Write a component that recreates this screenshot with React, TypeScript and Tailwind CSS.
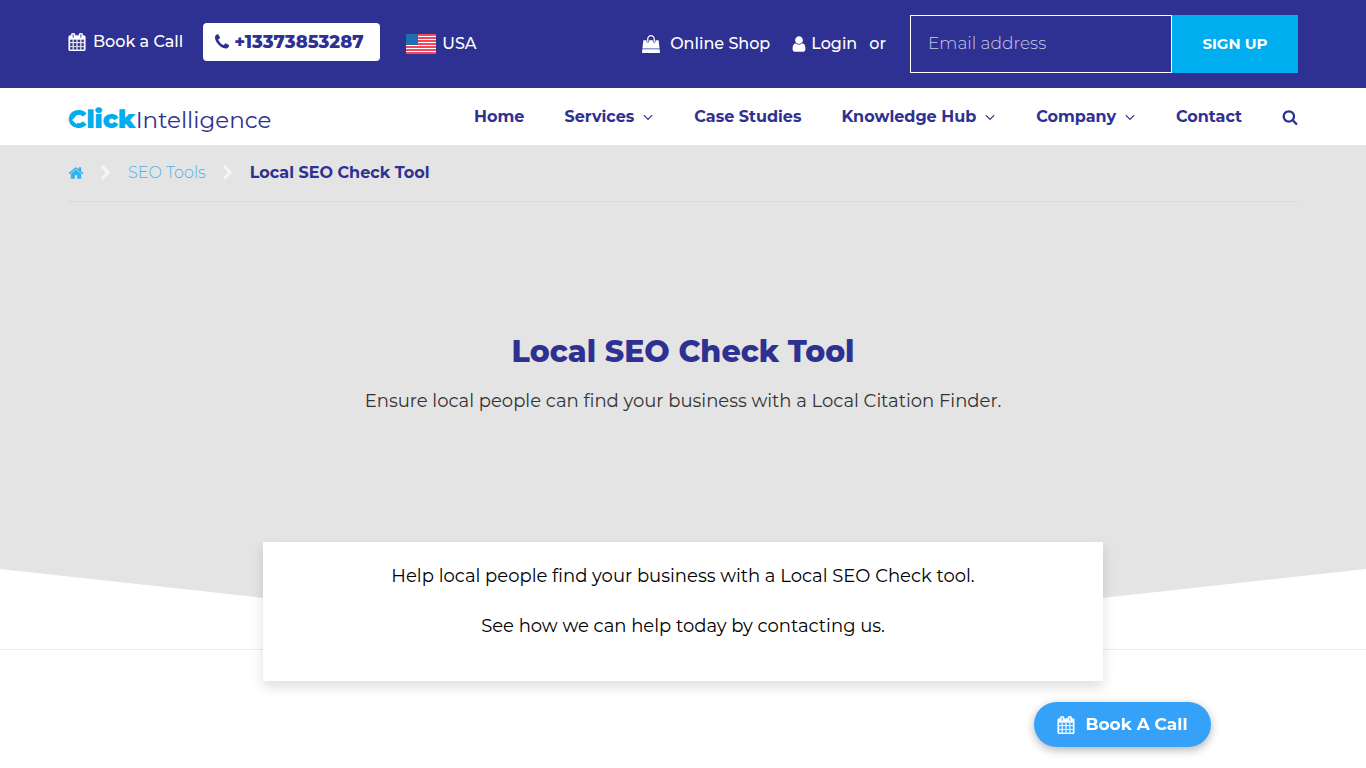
import type { ReactNode } from 'react';

const icons = {
  home: 'M1472 992v480q0 26-19 45t-45 19h-384v-384h-256v384h-384q-26 0-45-19t-19-45v-480q0-1 .5-3t.5-3l575-474 575 474q1 2 1 6zm223-69l-62 74q-8 9-21 11h-3q-13 0-21-7l-692-577-692 577q-12 8-24 7-13-2-21-11l-62-74q-8-10-7-23.5t11-21.5l719-599q32-26 76-26t76 26l244 204v-195q0-14 9-23t23-9h192q14 0 23 9t9 23v408l219 182q10 8 11 21.5t-7 23.5z',
  calendar:
    'M192 1664h288v-288h-288v288zm352 0h320v-288h-320v288zm-352-352h288v-320h-288v320zm352 0h320v-320h-320v320zm-352-384h288v-288h-288v288zm736 736h320v-288h-320v288zm-384-736h320v-288h-320v288zm768 736h288v-288h-288v288zm-384-352h320v-320h-320v320zm-352-864v-288q0-13-9.5-22.5t-22.5-9.5h-64q-13 0-22.5 9.5t-9.5 22.5v288q0 13 9.5 22.5t22.5 9.5h64q13 0 22.5-9.5t9.5-22.5zm736 864h288v-320h-288v320zm-384-384h320v-288h-320v288zm384 0h288v-288h-288v288zm32-480v-288q0-13-9.5-22.5t-22.5-9.5h-64q-13 0-22.5 9.5t-9.5 22.5v288q0 13 9.5 22.5t22.5 9.5h64q13 0 22.5-9.5t9.5-22.5zm384-64v1280q0 52-38 90t-90 38h-1408q-52 0-90-38t-38-90v-1280q0-52 38-90t90-38h128v-96q0-66 47-113t113-47h64q66 0 113 47t47 113v96h384v-96q0-66 47-113t113-47h64q66 0 113 47t47 113v96h128q52 0 90 38t38 90z',
  phone:
    'M1600 1240q0 27-10 70.5t-21 68.5q-21 50-122 106-94 51-186 51-27 0-52.5-3.5t-57.5-12.5-47.5-14.5-55.5-20.5-49-18q-98-35-175-83-128-79-264.5-215.5t-215.5-264.5q-48-77-83-175-3-9-18-49t-20.5-55.5-14.5-47.5-12.5-57.5-3.5-52.5q0-92 51-186 56-101 106-122 25-11 68.5-21t70.5-10q14 0 21 3 18 6 53 76 11 19 30 54t35 63.5 31 53.5q3 4 17.5 25t21.5 35.5 7 28.5q0 20-28.5 50t-62 55-62 53-28.5 46q0 9 5 22.5t8.5 20.5 14 24 11.5 19q76 137 174 235t235 174q2 1 19 11.5t24 14 20.5 8.5 22.5 5q18 0 46-28.5t53-62 55-62 50-28.5q14 0 28.5 7t35.5 21.5 25 17.5q25 15 53.5 31t63.5 35 54 30q70 35 76 53 3 7 3 21z',
  search:
    'M1216 832q0-185-131.5-316.5t-316.5-131.5-316.5 131.5-131.5 316.5 131.5 316.5 316.5 131.5 316.5-131.5 131.5-316.5zm512 832q0 52-38 90t-90 38q-54 0-90-38l-343-342q-179 124-399 124-143 0-273.5-55.5t-225-150-150-225-55.5-273.5 55.5-273.5 150-225 225-150 273.5-55.5 273.5 55.5 225 150 150 225 55.5 273.5q0 220-124 399l343 343q37 37 37 90z',
  user: 'M1536 1399q0 109-62.5 187t-150.5 78h-854q-88 0-150.5-78t-62.5-187q0-85 8.5-160.5t31.5-152 58.5-131 94-89 134.5-34.5q131 128 313 128t313-128q76 0 134.5 34.5t94 89 58.5 131 31.5 152 8.5 160.5zm-256-887q0 159-112.5 271.5t-271.5 112.5-271.5-112.5-112.5-271.5 112.5-271.5 271.5-112.5 271.5 112.5 112.5 271.5z',
  bag: 'M1757 1408l35 313q3 28-16 50-19 21-48 21h-1664q-29 0-48-21-19-22-16-50l35-313h1722zm-93-839l86 775h-1708l86-775q3-24 21-40.5t43-16.5h256v128q0 53 37.5 90.5t90.5 37.5 90.5-37.5 37.5-90.5v-128h384v128q0 53 37.5 90.5t90.5 37.5 90.5-37.5 37.5-90.5v-128h256q25 0 43 16.5t21 40.5zm-384-185v256q0 26-19 45t-45 19-45-19-19-45v-256q0-106-75-181t-181-75-181 75-75 181v256q0 26-19 45t-45 19-45-19-19-45v-256q0-159 112.5-271.5t271.5-112.5 271.5 112.5 112.5 271.5z',
  angleDown:
    'M1395 736q0 13-10 23l-466 466q-10 10-23 10t-23-10l-466-466q-10-10-10-23t10-23l50-50q10-10 23-10t23 10l393 393 393-393q10-10 23-10t23 10l50 50q10 10 10 23z',
  chevronRight:
    'M1363 877l-742 742q-19 19-45 19t-45-19l-166-166q-19-19-19-45t19-45l531-531-531-531q-19-19-19-45t19-45l166-166q19-19 45-19t45 19l742 742q19 19 19 45t-19 45z',
};

const Icon = ({ name, className = 'size-[18px]' }: { name: keyof typeof icons; className?: string }) => (
  <svg viewBox="0 0 1792 1792" fill="currentColor" aria-hidden="true" className={`shrink-0 ${className}`}>
    <path d={icons[name]} />
  </svg>
);

const navItems = [
  { label: 'Home' },
  { label: 'Services', menu: true },
  { label: 'Case Studies' },
  { label: 'Knowledge Hub', menu: true },
  { label: 'Company', menu: true },
  { label: 'Contact' },
];

const Flag = () => (
  <svg viewBox="0 0 30 20" className="h-5 w-[30px] shrink-0" aria-hidden="true">
    <rect width="30" height="20" fill="#fff" />
    {[0, 3, 6, 9, 12, 15, 18].map(y => (
      <rect key={y} y={y} width="30" height="2" fill="#f0485a" />
    ))}
    <rect width="12" height="11" fill="#1f6fb0" />
  </svg>
);

const Container = ({ children, className = '' }: { children: ReactNode; className?: string }) => (
  <div className={`px-[68px] ${className}`}>{children}</div>
);

const TopBar = () => (
  <header className="bg-[#2e3192] text-white">
    <Container className="flex h-[88px] items-center justify-between text-base font-medium">
      <div className="flex items-center pb-1">
        <a href="#call" className="flex items-center gap-[7px]">
          <Icon name="calendar" className="size-[18px] stroke-current stroke-[40]" />
          Book a Call
        </a>
        <a
          href="tel:+13373853287"
          className="ml-5 flex h-[38px] w-[177px] items-center gap-[3px] rounded bg-white pl-[10px] text-lg font-extrabold text-[#2e3192]"
        >
          <Icon name="phone" />
          +13373853287
        </a>
        <a href="#usa" className="ml-[26px] flex items-center gap-[6px] pt-1">
          <Flag />
          USA
        </a>
      </div>
      <div className="flex items-center">
        <a href="#shop" className="flex items-center gap-[10px]">
          <Icon name="bag" />
          Online Shop
        </a>
        <a href="#login" className="ml-5 flex items-center gap-[3px]">
          <Icon name="user" />
          Login
        </a>
        <span className="ml-3">or</span>
        <form className="ml-6 flex h-[58px]" onSubmit={e => e.preventDefault()}>
          <input
            type="email"
            aria-label="Email address"
            placeholder="Email address"
            className="w-[262px] border border-white bg-transparent px-[17px] text-[17px] font-light placeholder:text-[#c8c9e6]"
          />
          <button type="submit" className="w-[126px] bg-[#00aeef] text-[15px] font-bold">
            SIGN UP
          </button>
        </form>
      </div>
    </Container>
  </header>
);

const Logo = () => (
  <a href="#home" className="relative flex items-baseline pt-1.5 leading-8">
    <span className="text-[25px] font-black text-[#00aeef]">Click</span>
    <span className="text-[23px] text-[#2e3192]">Intelligence</span>
    {/* arrow cut into the C */}
    <svg viewBox="0 0 16 10" className="absolute top-[18px] left-1 h-2.5 w-4" aria-hidden="true">
      <path d="M0 5 5 0.500v3h5v3H5v3z" fill="#fff" />
    </svg>
  </a>
);

const MainNav = () => (
  <Container className="flex h-[57px] items-center justify-between bg-white">
    <Logo />
    <nav className="flex items-center gap-10 text-base font-bold text-[#2e3192]">
      {navItems.map(item => (
        <a key={item.label} href="#nav" className="flex items-center gap-2">
          {item.label}
          {item.menu && <Icon name="angleDown" className="-mx-0.5 size-4" />}
        </a>
      ))}
      <button type="button" aria-label="Search">
        <Icon name="search" className="size-4" />
      </button>
    </nav>
  </Container>
);

const Breadcrumb = () => (
  <nav aria-label="Breadcrumb" className="flex h-[57px] items-center gap-[14px] border-b border-[#dadada] text-base">
    <a href="#home" aria-label="Home" className="text-[#2fb4f0]">
      <Icon name="home" className="size-4" />
    </a>
    <Icon name="chevronRight" className="size-4 text-[#f5f5f5]" />
    <a href="#tools" className="font-light text-[#4fb3e6]">
      SEO Tools
    </a>
    <Icon name="chevronRight" className="size-4 text-[#f5f5f5]" />
    <span className="font-bold text-[#2e3192]">Local SEO Check Tool</span>
  </nav>
);

const App = () => (
  <div className="min-h-screen bg-white font-['Montserrat','Inter',sans-serif]">
    <TopBar />
    <MainNav />
    <main>
      <div className="border-b border-[#ebebeb]">
        <Container className="h-[504px] bg-[#e4e4e4] [clip-path:polygon(0_0,100%_0,100%_424px,50%_499px,0_424px)]">
          <Breadcrumb />
          <div className="pt-[130px] text-center">
            <h1 className="text-3xl leading-10 font-extrabold text-[#2e3192]">Local SEO Check Tool</h1>
            <p className="mt-[15px] text-lg leading-7 text-[#333]">
              Ensure local people can find your business with a Local Citation Finder.
            </p>
          </div>
        </Container>
      </div>
      <section className="relative mx-auto -mt-[108px] max-w-[840px] space-y-[22px] bg-white px-6 pt-5 pb-[41px] text-center text-lg leading-7 text-black shadow-[0_6px_12px_rgba(0,0,0,0.13)]">
        <p>Help local people find your business with a Local SEO Check tool.</p>
        <p>See how we can help today by contacting us.</p>
      </section>
    </main>
    <a
      href="#call"
      className="fixed right-[155px] bottom-[21px] flex h-[45px] w-[177px] items-center justify-center gap-[10px] rounded-full bg-[#35a1f8] text-[17px] font-bold text-white shadow-[0_3px_10px_rgba(0,0,0,0.3)]"
    >
      <Icon name="calendar" className="size-[18px] stroke-current stroke-[40]" />
      Book A Call
    </a>
  </div>
);

export default App;
